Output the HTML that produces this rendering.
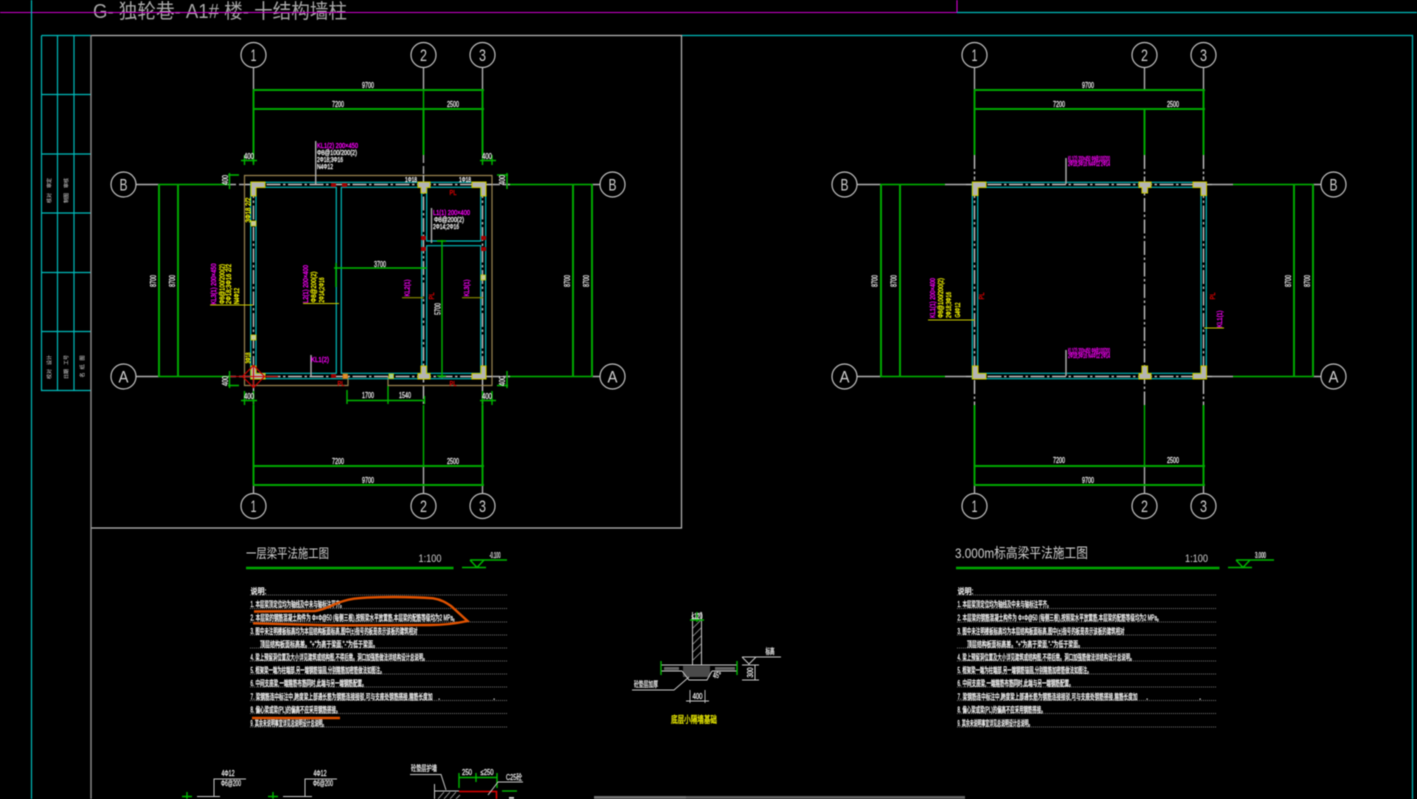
<!DOCTYPE html>
<html lang="zh">
<head>
<meta charset="utf-8">
<title>CAD</title>
<style>
html,body{margin:0;padding:0;background:#000;width:1417px;height:799px;overflow:hidden}
svg{display:block;filter:blur(.45px)}
text{font-family:"Liberation Sans","Noto Sans CJK SC",sans-serif;text-anchor:middle}
.d{font-size:8px;fill:#f0f0f0;stroke:#f0f0f0;stroke-width:.25}
.m{font-size:7px;fill:#ff00ff;stroke:#ff00ff;stroke-width:.3}
.w{font-size:7px;fill:#f8f8f8;stroke:#f8f8f8;stroke-width:.3}
.y{font-size:7px;fill:#ffff00;stroke:#ffff00;stroke-width:.3}
.r{font-size:7px;fill:#e00000;stroke:#e00000;stroke-width:.3}
.n{font-size:8px;fill:#fff;stroke:#fff;stroke-width:.3;text-anchor:start}
.ax{font-size:17px;fill:#cfcfcf}
.g{stroke:#00b800;stroke-width:1.4;fill:none}
.gt{stroke:#00a800;stroke-width:2;fill:none}
.gr{stroke:#b0b0b0;stroke-width:1.4;fill:none}
.c{stroke:#00bcbc;stroke-width:1.2;fill:none}
.ci{fill:none;stroke:#c0c0c0;stroke-width:1.2}
.cl{stroke:#c4c4c4;stroke-width:1.4;fill:none;stroke-dasharray:14 2.5 2.5 2.5}
.col{fill:#b4b4b4;stroke:#c8c800;stroke-width:1.1}
.dot{stroke:#999;stroke-width:.8;stroke-dasharray:1 1;fill:none}
.o{stroke:#e05200;stroke-width:2.4;fill:none}
.t{stroke:#9a8450;stroke-width:1.2;fill:none}
.yl{stroke:#c8c800;stroke-width:1.1;fill:none}
</style>
</head>
<body>
<svg width="1417" height="799" viewBox="0 0 1417 799" xmlns="http://www.w3.org/2000/svg">
<rect width="1417" height="799" fill="#000"/>

<!-- sheet title -->
<text x="220" y="18" font-size="20" fill="#a8a8a8" textLength="254" lengthAdjust="spacingAndGlyphs">G- 独轮巷- A1# 楼- 十结构墙柱</text>

<!-- frame lines -->
<path d="M0 12.5H957V0" stroke="#d000d0" stroke-width="1.1" fill="none"/>
<path d="M957 12.5H1417" class="c"/>
<path d="M31.5 0V799" class="c"/>
<path d="M41.5 35.5H91M41.5 35.5V390.5H91M57.5 35.5V390.5M74 35.5V390.5M41.5 94.5H91M41.5 154H91M41.5 213H91M41.5 272.5H91M41.5 331.5H91" class="c"/>
<path d="M681.5 35.5H1412.5V799" class="c"/>
<path d="M91 35.5H681.5V528H91" stroke="#b8b8b8" stroke-width="1.2" fill="none"/>
<path d="M91 35V799" stroke="#909090" stroke-width="1.4" fill="none"/>

<!-- title block text -->
<g font-size="5" fill="#e0e0e0">
<text transform="translate(51 183) rotate(-90)">审定</text>
<text transform="translate(51 198) rotate(-90)">核对</text>
<text transform="translate(68 183) rotate(-90)">审核</text>
<text transform="translate(68 198) rotate(-90)">制图</text>
<text transform="translate(51 360) rotate(-90)">设计</text>
<text transform="translate(51 374) rotate(-90)">校对</text>
<text transform="translate(68 360) rotate(-90)">工号</text>
<text transform="translate(68 374) rotate(-90)">日期</text>
<text transform="translate(84 358) rotate(-90)">图</text>
<text transform="translate(84 367) rotate(-90)">纸</text>
<text transform="translate(84 375) rotate(-90)">名</text>
</g>

<!-- ================= LEFT PLAN ================= -->
<path class="gr" d="M253.5 68V90M423.5 68V90M482.5 68V90M253.5 485V493M423.5 466V493M482.5 485V493M136 184.5H159M136 376.5H159M592 184.5H600M592 376.5H600"/>
<path class="g" d="M253.5 90V163M423.5 90V155M482.5 90V155M253.5 405V485M423.5 405V466M482.5 405V485M159 184.5H228M159 376.5H228M508 184.5H592M508 376.5H592"/>
<path class="gt" d="M253 90H484M253 109H484M253 466H484M253 485H484M159 184V377M178 184V377M573 184V377M592 184V377"/>
<path class="gt" d="M253.5 155V90M482.5 155V90M423.5 155V109M253.5 405V485M482.5 405V485"/>
<path class="gr" d="M423.5 155V175M228 184.5H245M492 184.5H510M228 376.5H245M492 376.5H510" stroke-dasharray="8 3"/>
<path class="cl" d="M423.5 385V405M482.5 385V405M253.5 385V405"/>

<path class="t" d="M348 376V385.5H244.5V175.5H492V385.5H388V376"/>

<path class="cl" d="M245 184.5H492M245 376.5H492M253.5 184V385M482.5 184V385M423.5 175V385"/>
<path class="c" d="M250.7 182.3H485.7V378.7H250.7ZM256 187.3H336.3V373.3H256ZM341.3 187.3H421.7V373.3H341.3ZM426.7 187.3H480.7V241H426.7ZM426.7 245.7H480.7V373.3H426.7Z"/>

<polygon class="col" points="251,182 265,182 265,187.5 256,187.5 256,196 251,196"/>
<polygon class="col" points="486,182 472,182 472,187.5 481,187.5 481,196 486,196"/>
<polygon class="col" points="251,379 265,379 265,373.5 256,373.5 256,366 251,366"/>
<polygon class="col" points="486,379 472,379 472,373.5 481,373.5 481,366 486,366"/>
<polygon class="col" points="418,182 430,182 430,187.5 426.5,187.5 426.5,193 421,193 421,187.5 418,187.5"/>
<polygon class="col" points="418,379 430,379 430,373.5 426.5,373.5 426.5,366 421,366 421,373.5 418,373.5"/>
<g fill="#c8c8a0" stroke="#c8c800" stroke-width=".8">
<rect x="251" y="221" width="5" height="5"/><rect x="251" y="335" width="5" height="5"/><rect x="481" y="275" width="4.5" height="5"/>
<rect x="343" y="374" width="4.5" height="4.5" fill="#e09030" stroke="#d07000"/><rect x="389" y="374" width="4.5" height="4.5" fill="#a0d0a0"/>
</g>
<g fill="#a00000"><rect x="331" y="183" width="5" height="4"/><rect x="342" y="183" width="5" height="4"/><rect x="421" y="236" width="5" height="4"/><rect x="481" y="236" width="5" height="4"/><rect x="421" y="247" width="5" height="4"/><rect x="481" y="247" width="5" height="4"/><rect x="331" y="374" width="5" height="4"/></g>

<path d="M253.5 365.5L264.5 376.5L253.5 387.5L242.5 376.5Z" fill="none" stroke="#c80000" stroke-width="1.2"/>
<path d="M230 376.5H278M253.5 365V388" stroke="#d00000" stroke-width="1.1" fill="none"/>

<circle class="ci" cx="253.5" cy="55" r="12.5"/><circle class="ci" cx="423.5" cy="55" r="12.5"/><circle class="ci" cx="482.5" cy="55" r="12.5"/>
<circle class="ci" cx="253.5" cy="506" r="12.5"/><circle class="ci" cx="423.5" cy="506" r="12.5"/><circle class="ci" cx="482.5" cy="506" r="12.5"/>
<circle class="ci" cx="123.5" cy="184.5" r="12.5"/><circle class="ci" cx="612.5" cy="184.5" r="12.5"/><circle class="ci" cx="123.5" cy="376.5" r="12.5"/><circle class="ci" cx="612.5" cy="376.5" r="12.5"/>
<text x="253.5" y="61" class="ax" textLength="6" lengthAdjust="spacingAndGlyphs">1</text><text x="423.5" y="61" class="ax" textLength="7" lengthAdjust="spacingAndGlyphs">2</text><text x="482.5" y="61" class="ax" textLength="7" lengthAdjust="spacingAndGlyphs">3</text>
<text x="253.5" y="512" class="ax" textLength="6" lengthAdjust="spacingAndGlyphs">1</text><text x="423.5" y="512" class="ax" textLength="7" lengthAdjust="spacingAndGlyphs">2</text><text x="482.5" y="512" class="ax" textLength="7" lengthAdjust="spacingAndGlyphs">3</text>
<text x="123.5" y="190.5" class="ax" textLength="8" lengthAdjust="spacingAndGlyphs">B</text><text x="612.5" y="190.5" class="ax" textLength="8" lengthAdjust="spacingAndGlyphs">B</text>
<text x="123.5" y="382.5" class="ax" textLength="10" lengthAdjust="spacingAndGlyphs">A</text><text x="612.5" y="382.5" class="ax" textLength="10" lengthAdjust="spacingAndGlyphs">A</text>

<text class="d" x="368" y="88" textLength="12" lengthAdjust="spacingAndGlyphs">9700</text>
<text class="d" x="338" y="107" textLength="12" lengthAdjust="spacingAndGlyphs">7200</text>
<text class="d" x="453" y="107" textLength="12" lengthAdjust="spacingAndGlyphs">2500</text>
<text class="d" x="338" y="464" textLength="12" lengthAdjust="spacingAndGlyphs">7200</text>
<text class="d" x="453" y="464" textLength="12" lengthAdjust="spacingAndGlyphs">2500</text>
<text class="d" x="368" y="483" textLength="12" lengthAdjust="spacingAndGlyphs">9700</text>
<text class="d" transform="translate(156 281) rotate(-90)" textLength="12" lengthAdjust="spacingAndGlyphs">8700</text>
<text class="d" transform="translate(175 281) rotate(-90)" textLength="12" lengthAdjust="spacingAndGlyphs">8700</text>
<text class="d" transform="translate(570 281) rotate(-90)" textLength="12" lengthAdjust="spacingAndGlyphs">8700</text>
<text class="d" transform="translate(589 281) rotate(-90)" textLength="12" lengthAdjust="spacingAndGlyphs">8700</text>

<path class="g" d="M241 160.5H257M244.5 155V165M253.5 155V165M480 160.5H496M482.5 155V165M492 155V165M229.5 173V189M228 175H239M507 173V189M497 175H508M229.5 371V388M228 385.5H239M507 371V388M497 385.5H508M241 400.5H257M244.5 391V405M253.5 391V405M480 400.5H496M482.5 391V405M492 391V405"/>
<text class="d" x="249" y="159" textLength="10" lengthAdjust="spacingAndGlyphs">400</text>
<text class="d" x="487" y="159" textLength="10" lengthAdjust="spacingAndGlyphs">400</text>
<text class="d" x="249" y="399" textLength="10" lengthAdjust="spacingAndGlyphs">400</text>
<text class="d" x="487" y="399" textLength="10" lengthAdjust="spacingAndGlyphs">400</text>
<text class="d" transform="translate(228 180) rotate(-90)" textLength="10" lengthAdjust="spacingAndGlyphs">400</text>
<text class="d" transform="translate(505 180) rotate(-90)" textLength="10" lengthAdjust="spacingAndGlyphs">400</text>
<text class="d" transform="translate(228 381) rotate(-90)" textLength="10" lengthAdjust="spacingAndGlyphs">400</text>
<text class="d" transform="translate(505 381) rotate(-90)" textLength="10" lengthAdjust="spacingAndGlyphs">400</text>

<path class="g" d="M334 268H427M336 263V287M442 240V378M347 400.5H425M347 390V404M388 386V404M424.5 396V404M437 241H446M437 376H446"/>
<text class="d" x="380" y="267" textLength="12" lengthAdjust="spacingAndGlyphs">3700</text>
<text class="d" transform="translate(440.5 309) rotate(-90)" textLength="12" lengthAdjust="spacingAndGlyphs">5700</text>
<text class="d" x="368" y="398" textLength="12" lengthAdjust="spacingAndGlyphs">1700</text>
<text class="d" x="405" y="398" textLength="12" lengthAdjust="spacingAndGlyphs">1540</text>

<path class="gr" d="M315.7 141V184M431.5 208V243M311 355V376"/>
<text class="m" x="337.5" y="148" textLength="41" lengthAdjust="spacingAndGlyphs">KL1(2) 200×450</text>
<text class="w" x="337" y="155" textLength="40" lengthAdjust="spacingAndGlyphs">Φ8@100/200(2)</text>
<text class="w" x="330" y="162" textLength="26" lengthAdjust="spacingAndGlyphs">2Φ18;3Φ16</text>
<text class="w" x="325" y="169" textLength="16" lengthAdjust="spacingAndGlyphs">N4Φ12</text>
<text class="m" x="451.5" y="215" textLength="37" lengthAdjust="spacingAndGlyphs">L1(1) 200×400</text>
<text class="w" x="449" y="222" textLength="30" lengthAdjust="spacingAndGlyphs">Φ8@200(2)</text>
<text class="w" x="446" y="229" textLength="26" lengthAdjust="spacingAndGlyphs">2Φ14;2Φ16</text>
<text class="m" x="320" y="362" textLength="18" lengthAdjust="spacingAndGlyphs">KL1(2)</text>
<text class="w" x="411" y="182" textLength="12" lengthAdjust="spacingAndGlyphs">1Φ18</text>
<text class="w" x="465" y="182" textLength="12" lengthAdjust="spacingAndGlyphs">1Φ18</text>

<text class="m" transform="translate(216 284) rotate(-90)" textLength="41" lengthAdjust="spacingAndGlyphs">KL3(1) 200×450</text>
<text class="y" transform="translate(224.5 284) rotate(-90)" textLength="40" lengthAdjust="spacingAndGlyphs">Φ8@100/200(2)</text>
<text class="y" transform="translate(231 284) rotate(-90)" textLength="40" lengthAdjust="spacingAndGlyphs">2Φ18;3Φ16 2/2</text>
<text class="y" transform="translate(239 296) rotate(-90)" textLength="16" lengthAdjust="spacingAndGlyphs">N4Φ12</text>
<path class="yl" d="M210 305H253"/>
<text class="y" transform="translate(250.5 210) rotate(-90)" textLength="25" lengthAdjust="spacingAndGlyphs">3Φ18 2/2</text>
<text class="y" transform="translate(250.5 358) rotate(-90)" textLength="11" lengthAdjust="spacingAndGlyphs">3Φ18</text>

<text class="m" transform="translate(308 284) rotate(-90)" textLength="38" lengthAdjust="spacingAndGlyphs">L2(1) 200×400</text>
<text class="y" transform="translate(316 287) rotate(-90)" textLength="31" lengthAdjust="spacingAndGlyphs">Φ8@200(2)</text>
<text class="y" transform="translate(324 290) rotate(-90)" textLength="25" lengthAdjust="spacingAndGlyphs">2Φ14;2Φ16</text>
<path class="yl" d="M303 303.5H339"/>

<text class="m" transform="translate(409.5 288) rotate(-90)" textLength="17" lengthAdjust="spacingAndGlyphs">KL2(1)</text>
<text class="m" transform="translate(469 288) rotate(-90)" textLength="17" lengthAdjust="spacingAndGlyphs">KL3(1)</text>
<path d="M402 297.7H424M462 297.7H483" stroke="#8c8c00" stroke-width="1.1" fill="none"/>
<text class="r" transform="translate(434 296) rotate(-90)" textLength="7" lengthAdjust="spacingAndGlyphs">PL</text>
<text class="r" x="453" y="195" textLength="7" lengthAdjust="spacingAndGlyphs">PL</text>
<text class="r" x="341" y="386" textLength="7" lengthAdjust="spacingAndGlyphs">PL</text>
<text class="r" x="453" y="386" textLength="7" lengthAdjust="spacingAndGlyphs">PL</text>

<!-- ================= RIGHT PLAN ================= -->
<path class="gr" d="M974.5 68V90M1144.5 68V90M1203.5 68V90M974.5 485V493M1144.5 466V493M1203.5 485V493M857 184.5H881M857 376.5H881M1313 184.5H1321M1313 376.5H1321"/>
<path class="gr" d="M945 184.5H966M1212 184.5H1233M945 376.5H966M1212 376.5H1233"/>
<path class="g" d="M881 184.5H945M881 376.5H945M1233 184.5H1313M1233 376.5H1313M1144.5 405V466"/>
<path class="gt" d="M974 90H1205M974 109H1205M974 466H1205M974 485H1205M881 184V377M900 184V377M1294 184V377M1313 184V377"/>
<path class="gt" d="M974.5 155V90M1203.5 155V90M1144.5 155V109M974.5 405V485M1203.5 405V485"/>
<path class="cl" d="M974.5 155V180M1203.5 155V180M974.5 380V405M1203.5 380V405M1144.5 155V405"/>
<path class="cl" d="M966 184.5H1212M966 376.5H1212M974.5 184V377M1203.5 184V377"/>
<path class="c" d="M972.3 182.3H1206.3V378.7H972.3ZM977.7 187.3H1201V373.3H977.7Z"/>
<polygon class="col" points="972.5,182 986,182 986,187.5 978,187.5 978,195.5 972.5,195.5"/>
<polygon class="col" points="1206.5,182 1193,182 1193,187.5 1201,187.5 1201,195.5 1206.5,195.5"/>
<polygon class="col" points="972.5,379 986,379 986,373.5 978,373.5 978,366 972.5,366"/>
<polygon class="col" points="1206.5,379 1193,379 1193,373.5 1201,373.5 1201,366 1206.5,366"/>
<polygon class="col" points="1139,182 1151,182 1151,187.5 1147.5,187.5 1147.5,193 1142,193 1142,187.5 1139,187.5"/>
<polygon class="col" points="1139,379 1151,379 1151,373.5 1147.5,373.5 1147.5,366 1142,366 1142,373.5 1139,373.5"/>

<circle class="ci" cx="974.5" cy="55" r="12.5"/><circle class="ci" cx="1144.5" cy="55" r="12.5"/><circle class="ci" cx="1203.5" cy="55" r="12.5"/>
<circle class="ci" cx="974.5" cy="506" r="12.5"/><circle class="ci" cx="1144.5" cy="506" r="12.5"/><circle class="ci" cx="1203.5" cy="506" r="12.5"/>
<circle class="ci" cx="844.5" cy="184.5" r="12.5"/><circle class="ci" cx="1333.5" cy="184.5" r="12.5"/><circle class="ci" cx="844.5" cy="376.5" r="12.5"/><circle class="ci" cx="1333.5" cy="376.5" r="12.5"/>
<text x="974.5" y="61" class="ax" textLength="6" lengthAdjust="spacingAndGlyphs">1</text><text x="1144.5" y="61" class="ax" textLength="7" lengthAdjust="spacingAndGlyphs">2</text><text x="1203.5" y="61" class="ax" textLength="7" lengthAdjust="spacingAndGlyphs">3</text>
<text x="974.5" y="512" class="ax" textLength="6" lengthAdjust="spacingAndGlyphs">1</text><text x="1144.5" y="512" class="ax" textLength="7" lengthAdjust="spacingAndGlyphs">2</text><text x="1203.5" y="512" class="ax" textLength="7" lengthAdjust="spacingAndGlyphs">3</text>
<text x="844.5" y="190.5" class="ax" textLength="8" lengthAdjust="spacingAndGlyphs">B</text><text x="1333.5" y="190.5" class="ax" textLength="8" lengthAdjust="spacingAndGlyphs">B</text>
<text x="844.5" y="382.5" class="ax" textLength="10" lengthAdjust="spacingAndGlyphs">A</text><text x="1333.5" y="382.5" class="ax" textLength="10" lengthAdjust="spacingAndGlyphs">A</text>

<text class="d" x="1088" y="88" textLength="12" lengthAdjust="spacingAndGlyphs">9700</text>
<text class="d" x="1059" y="107" textLength="12" lengthAdjust="spacingAndGlyphs">7200</text>
<text class="d" x="1173" y="107" textLength="12" lengthAdjust="spacingAndGlyphs">2500</text>
<text class="d" x="1059" y="463" textLength="12" lengthAdjust="spacingAndGlyphs">7200</text>
<text class="d" x="1173" y="463" textLength="12" lengthAdjust="spacingAndGlyphs">2500</text>
<text class="d" x="1088" y="483" textLength="12" lengthAdjust="spacingAndGlyphs">9700</text>
<text class="d" transform="translate(877.5 281) rotate(-90)" textLength="12" lengthAdjust="spacingAndGlyphs">8700</text>
<text class="d" transform="translate(896.5 281) rotate(-90)" textLength="12" lengthAdjust="spacingAndGlyphs">8700</text>
<text class="d" transform="translate(1291 281) rotate(-90)" textLength="12" lengthAdjust="spacingAndGlyphs">8700</text>
<text class="d" transform="translate(1310 281) rotate(-90)" textLength="12" lengthAdjust="spacingAndGlyphs">8700</text>

<path class="gr" d="M1066 158V184M1066 350V376"/>
<text class="m" x="1089" y="161" font-size="5" textLength="42" lengthAdjust="spacingAndGlyphs">KL1(2) 200×450 Φ8@100/200</text>
<text class="m" x="1089" y="166" font-size="5" textLength="42" lengthAdjust="spacingAndGlyphs">2Φ18;3Φ16 N4Φ12 2Φ14</text>
<text class="m" x="1089" y="353" font-size="5" textLength="42" lengthAdjust="spacingAndGlyphs">KL1(2) 200×450 Φ8@100/200</text>
<text class="m" x="1089" y="358" font-size="5" textLength="42" lengthAdjust="spacingAndGlyphs">2Φ18;3Φ16 N4Φ12 2Φ14</text>

<text class="m" transform="translate(935 298) rotate(-90)" textLength="40" lengthAdjust="spacingAndGlyphs">KL1(1) 200×400</text>
<text class="y" transform="translate(943 298) rotate(-90)" textLength="40" lengthAdjust="spacingAndGlyphs">Φ8@100/200(2)</text>
<text class="y" transform="translate(951 305) rotate(-90)" textLength="26" lengthAdjust="spacingAndGlyphs">2Φ18;3Φ16</text>
<text class="y" transform="translate(960 310) rotate(-90)" textLength="15" lengthAdjust="spacingAndGlyphs">G4Φ12</text>
<path class="yl" d="M928 320H975"/>
<text class="m" transform="translate(1222 319) rotate(-90)" textLength="17" lengthAdjust="spacingAndGlyphs">KL1(1)</text>
<path class="yl" d="M1204 328H1224"/>
<text class="r" transform="translate(984 296) rotate(-90)" textLength="7" lengthAdjust="spacingAndGlyphs">PL</text>
<text class="r" transform="translate(1215 296) rotate(-90)" textLength="7" lengthAdjust="spacingAndGlyphs">PL</text>

<!-- ================= TITLES ================= -->
<text x="287.5" y="558" font-size="13" fill="#cfcfcf" textLength="83" lengthAdjust="spacingAndGlyphs">一层梁平法施工图</text>
<text x="430" y="562" font-size="11" fill="#cfcfcf" textLength="23" lengthAdjust="spacingAndGlyphs">1:100</text>
<path d="M246 568H453.5" stroke="#00a800" stroke-width="2.6" fill="none"/>
<path class="g" d="M470 560H507M462 567.5H486M470 560L477 567.5L484 560"/>
<text class="d" x="495" y="558" font-size="7" textLength="11" lengthAdjust="spacingAndGlyphs">-0.100</text>

<text x="1021.5" y="558" font-size="14" fill="#cfcfcf" textLength="133" lengthAdjust="spacingAndGlyphs">3.000m标高梁平法施工图</text>
<text x="1196.5" y="562" font-size="11" fill="#cfcfcf" textLength="23" lengthAdjust="spacingAndGlyphs">1:100</text>
<path d="M956 568H1219.5" stroke="#00a800" stroke-width="2.6" fill="none"/>
<path class="g" d="M1236 560H1274M1228 567.5H1252M1236 560L1243 567.5L1250 560"/>
<text class="d" x="1260.5" y="558" font-size="7" textLength="11" lengthAdjust="spacingAndGlyphs">3.000</text>

<!-- ================= NOTES LEFT ================= -->
<path class="dot" d="M250 595H508M250 608.5H508M250 622H508M250 635H508M250 648H508M250 661H508M250 674H508M250 687H508M250 700.5H508M250 713.5H508M250 727H508"/>
<text class="n" x="250.5" y="594" textLength="16" lengthAdjust="spacingAndGlyphs">说明:</text>
<text class="n" x="250.5" y="607" textLength="94" lengthAdjust="spacingAndGlyphs">1. 本层梁顶定位均为轴线及中未与轴标注平齐。</text>
<text class="n" x="250.5" y="620.5" textLength="207" lengthAdjust="spacingAndGlyphs">2. 本层梁的钢筋混凝土构件为 Φ×Φ@50 (每侧三根),按照梁水平放置筋,本层梁的配筋等级均为2 MPa。</text>
<text class="n" x="250.5" y="634" textLength="167" lengthAdjust="spacingAndGlyphs">3. 图中未注明楼板标高均为本层结构板面标高,图中(±)指号的板是表示该板的建筑相对</text>
<text class="n" x="260" y="647" textLength="118" lengthAdjust="spacingAndGlyphs">顶层结构板面标高差。"+"为高于梁面,"-"为低于梁面。</text>
<text class="n" x="250.5" y="660" textLength="177" lengthAdjust="spacingAndGlyphs">4. 梁上预留洞位置及大小详见建筑或结构图,不得后凿。洞口加强筋做法详结构设计总说明。</text>
<text class="n" x="250.5" y="673" textLength="134" lengthAdjust="spacingAndGlyphs">5. 框架梁一端为柱端部,另一端钢筋锚固,分别箍筋加密筋做法如图注。</text>
<text class="n" x="250.5" y="686" textLength="116" lengthAdjust="spacingAndGlyphs">6. 中间支座梁,一端箍筋布筋同时,此端与另一端钢筋配置。</text>
<text class="n" x="250.5" y="699.5" textLength="182" lengthAdjust="spacingAndGlyphs">7. 梁钢筋连中标注中,跨度梁上部通长筋为钢筋连接接驳,可与支座处钢筋搭接,箍筋长度加</text>
<text class="n" x="438" y="699.5">.</text><text class="n" x="493" y="699.5">.</text>
<text class="n" x="250.5" y="712.5" textLength="90" lengthAdjust="spacingAndGlyphs">8. 偏心梁或梁(PL)的偏高不应采用钢筋搭接。</text>
<text class="n" x="250.5" y="726" textLength="76" lengthAdjust="spacingAndGlyphs">9. 其余未说明事宜详见总说明设计总说明。</text>

<path class="o" d="M254 611.5L315 611C322 610 326 608 331 606C338 602.5 345 600 354 598.7C375 596.5 410 596.5 433 598.3C441 599.5 446 602.5 451 606C456 610.5 462 616 467.5 621C456 623.5 445 625 430 625L330 625.3L253 623.3"/>
<path d="M252 718H340" stroke="#e05200" stroke-width="2.4" fill="none"/>

<!-- ================= NOTES RIGHT ================= -->
<path class="dot" d="M957 595H1216M957 608.5H1216M957 622H1216M957 635H1216M957 648H1216M957 661H1216M957 674H1216M957 687H1216M957 700.5H1216M957 713.5H1216M957 727H1216"/>
<text class="n" x="957.5" y="594" textLength="16" lengthAdjust="spacingAndGlyphs">说明:</text>
<text class="n" x="957.5" y="607" textLength="94" lengthAdjust="spacingAndGlyphs">1. 本层梁顶定位均为轴线及中未与轴标注平齐。</text>
<text class="n" x="957.5" y="620.5" textLength="204" lengthAdjust="spacingAndGlyphs">2. 本层梁的钢筋混凝土构件为 Φ×Φ@50 (每侧三根),按照梁水平放置筋,本层梁的配筋等级均为2 MPa。</text>
<text class="n" x="957.5" y="634" textLength="167" lengthAdjust="spacingAndGlyphs">3. 图中未注明楼板标高均为本层结构板面标高,图中(±)指号的板是表示该板的建筑相对</text>
<text class="n" x="967" y="647" textLength="116" lengthAdjust="spacingAndGlyphs">顶层结构板面标高差。"+"为高于梁面,"-"为低于梁面。</text>
<text class="n" x="957.5" y="660" textLength="177" lengthAdjust="spacingAndGlyphs">4. 梁上预留洞位置及大小详见建筑或结构图,不得后凿。洞口加强筋做法详结构设计总说明。</text>
<text class="n" x="957.5" y="673" textLength="134" lengthAdjust="spacingAndGlyphs">5. 框架梁一端为柱端部,另一端钢筋锚固,分别箍筋加密筋做法如图注。</text>
<text class="n" x="957.5" y="686" textLength="116" lengthAdjust="spacingAndGlyphs">6. 中间支座梁,一端箍筋布筋同时,此端与另一端钢筋配置。</text>
<text class="n" x="957.5" y="699.5" textLength="180" lengthAdjust="spacingAndGlyphs">7. 梁钢筋连中标注中,跨度梁上部通长筋为钢筋连接接驳,可与支座处钢筋搭接,箍筋长度加</text>
<text class="n" x="1146" y="699.5">.</text><text class="n" x="1199" y="699.5">.</text>
<text class="n" x="957.5" y="712.5" textLength="88" lengthAdjust="spacingAndGlyphs">8. 偏心梁或梁(PL)的偏高不应采用钢筋搭接。</text>
<text class="n" x="957.5" y="726" textLength="75" lengthAdjust="spacingAndGlyphs">9. 其余未说明事宜详见总说明设计总说明。</text>

<!-- ================= WALL FOUNDATION DETAIL ================= -->
<path d="M692.5 612V665M701.5 612V665" stroke="#c8c8c8" stroke-width="1" fill="none"/>
<path d="M693 620L701 612M693 628L701 620M693 636L701 628M693 644L701 636M693 652L701 644M693 660L701 652" stroke="#b0b0b0" stroke-width=".7" fill="none"/>
<path d="M690 620H704M697 612V622" class="g" stroke-width="1"/>
<text class="d" x="697" y="619" font-size="6" textLength="11" lengthAdjust="spacingAndGlyphs">≤120</text>
<path d="M661 665H737M661 671H682M712 671H737M682 671L689 680H707L712 671" stroke="#d0d0d0" stroke-width="1" fill="none"/>
<path d="M661 661V675M737 661V675" class="g" stroke-width="1"/>
<g fill="#b8b8b8"><rect x="664" y="667" width="15" height="3" opacity=".55"/><rect x="683" y="666" width="27" height="11" opacity=".4"/><rect x="715" y="667" width="20" height="3" opacity=".55"/></g>
<path d="M689 677L674 690H632" stroke="#c8c8c8" stroke-width="1" fill="none"/>
<text class="d" x="646" y="687" font-size="6.5" textLength="24" lengthAdjust="spacingAndGlyphs">砼垫层加厚</text>
<text class="d" x="717" y="678" font-size="6" textLength="8" lengthAdjust="spacingAndGlyphs">45°</text>
<path d="M690 690V703M705 690V703M686 701H709" stroke="#c8c8c8" stroke-width=".9" fill="none"/>
<text class="d" x="697.5" y="699" textLength="10" lengthAdjust="spacingAndGlyphs">400</text>
<path d="M742 657H781M742 657L749 664L756 657M742 665H759M742 680H759M755 665V680" stroke="#c8c8c8" stroke-width="1" fill="none"/>
<text class="d" x="770" y="654" font-size="7" textLength="9" lengthAdjust="spacingAndGlyphs">标高</text>
<text class="d" transform="translate(753 672.5) rotate(-90)" textLength="10" lengthAdjust="spacingAndGlyphs">300</text>
<text x="694" y="723" font-size="9.5" fill="#f0f000" stroke="#f0f000" stroke-width=".35" textLength="46" lengthAdjust="spacingAndGlyphs">底层小隔墙基础</text>

<!-- ================= BOTTOM DETAILS ================= -->
<path d="M246 779H214V796M197 796.5H220M337 779H305V796M283 796.5H312" stroke="#c8c8c8" stroke-width="1" fill="none"/>
<path class="g" d="M182 796.5H192M187 792V799M268 796.5H278M273 792V799"/>
<text class="d" x="228" y="776" textLength="13" lengthAdjust="spacingAndGlyphs">4Φ12</text>
<text class="d" x="231" y="786" textLength="20" lengthAdjust="spacingAndGlyphs">Φ6@200</text>
<text class="d" x="320" y="776" textLength="13" lengthAdjust="spacingAndGlyphs">4Φ12</text>
<text class="d" x="323" y="786" textLength="20" lengthAdjust="spacingAndGlyphs">Φ6@200</text>

<text class="d" x="424" y="771" font-size="7.5" textLength="26" lengthAdjust="spacingAndGlyphs">砼垫层护墙</text>
<path d="M410 774.5H441L446 790" stroke="#c8c8c8" stroke-width="1" fill="none"/>
<path d="M434.5 784V799M434.5 791H459" stroke="#c8c8c8" stroke-width="1" fill="none"/>
<path d="M438 799L444 792M444 799L450 792M450 799L456 792M456 799L460 795" stroke="#a0a0a0" stroke-width=".9" fill="none"/>
<path class="g" d="M459 777.5H497M459 773V788M476 773V782M497 773V788"/>
<text class="d" x="467" y="775" textLength="10" lengthAdjust="spacingAndGlyphs">250</text>
<text class="d" x="487" y="775" textLength="13" lengthAdjust="spacingAndGlyphs">≤250</text>
<path d="M459 791.5H496.5V799" stroke="#e00000" stroke-width="1.6" fill="none"/>
<path d="M523 782H498L488 795" stroke="#c8c8c8" stroke-width="1" fill="none"/>
<text class="d" x="514" y="780" font-size="8.5" textLength="16" lengthAdjust="spacingAndGlyphs">C25砼</text>
<path class="g" d="M502 791H517"/>
<rect x="509" y="797" width="5" height="2" fill="#cfcfcf"/>

<!-- scrollbar -->
<rect x="594" y="796" width="371" height="3" fill="#606060"/>
<rect x="594" y="796" width="92" height="3" fill="#707070"/>
</svg>
</body>
</html>
